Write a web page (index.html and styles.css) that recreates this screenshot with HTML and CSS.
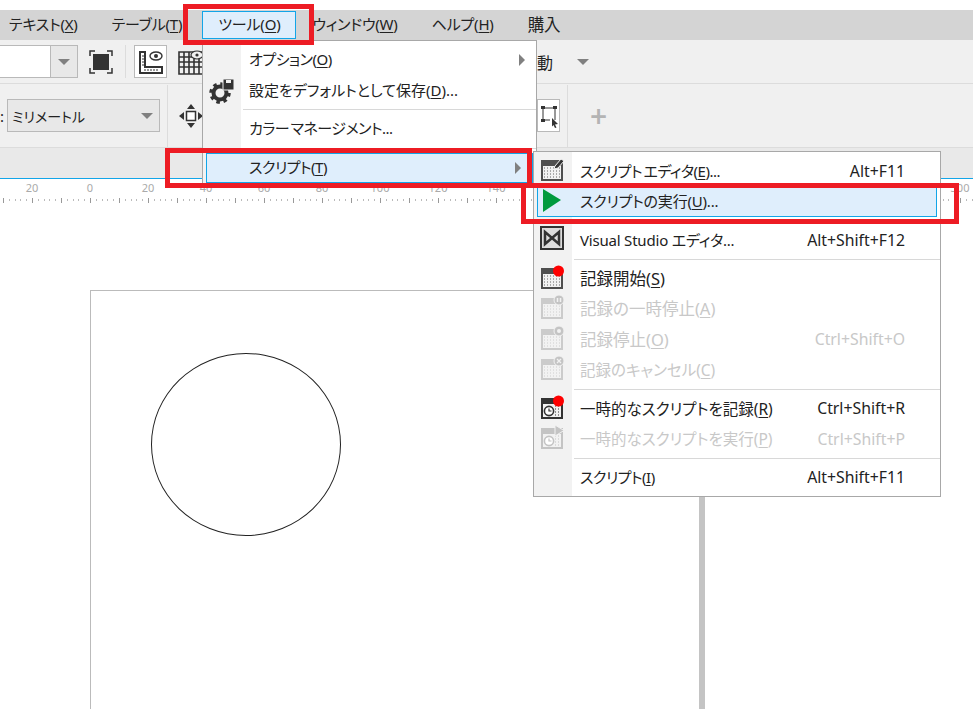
FILE: index.html
```html
<!DOCTYPE html>
<html lang="ja">
<head>
  <meta charset="UTF-8" />
  <title>ツール メニュー</title>
  <link rel="stylesheet" href="styles.css">
</head>
<body>
  <svg class="defs" width="0" height="0">
    <symbol id="cal" viewBox="0 0 24 24">
      <path d="M1 3h22v21H1z M3 9v13h18V9z" fill="currentColor" fill-rule="evenodd" opacity=".85"/>
      <g stroke="currentColor" stroke-width="1" stroke-dasharray="1 2" opacity=".75">
        <path d="M4 11h16M4 14h16M4 17h16M4 20h16"/>
      </g>
    </symbol>
    <symbol id="clock" viewBox="0 0 24 24">
      <path d="M1 3h22v21H1z M3 9v13h18V9z" fill="currentColor" fill-rule="evenodd"/>
      <g stroke="currentColor" stroke-width="1" stroke-dasharray="1 2">
        <path d="M15 11h5M15 14h5M15 17h5M15 20h5"/>
      </g>
      <circle cx="9" cy="16" r="4.6" fill="#fff" stroke="currentColor" stroke-width="1.6"/>
      <path d="M9 13.5V16h2.5" fill="none" stroke="currentColor" stroke-width="1.2"/>
    </symbol>
  </svg>

  <div class="app">
    <nav class="menubar">
      <span class="menubar-item">テキスト(<u>X</u>)</span>
      <span class="menubar-item">テーブル(<u>T</u>)</span>
      <span class="menubar-item active">ツール(<u>O</u>)</span>
      <span class="menubar-item">ウィンドウ(<u>W</u>)</span>
      <span class="menubar-item">ヘルプ(<u>H</u>)</span>
      <span class="menubar-item buy">購入</span>
    </nav>

    <div class="toolbar toolbar-top">
      <div class="combo combo-white"><span class="combo-arrow"><i class="caret"></i></span></div>
      <svg class="tool-frame" width="24" height="24" viewBox="0 0 24 24">
        <rect x="4" y="4" width="16" height="16" fill="#333"/>
        <path d="M1 6V1h5M18 1h5v5M23 18v5h-5M6 23H1v-5" fill="none" stroke="#333" stroke-width="1.5"/>
      </svg>
      <span class="divider"></span>
      <span class="tool-btn">
        <svg width="26" height="26" viewBox="0 0 26 26">
          <path d="M2 3h5v15h17v6H2z" fill="none" stroke="#333" stroke-width="2"/>
          <path d="M4 7h2M4 10h2M4 13h2M4 16h2M7 20v2M10 20v2M13 20v2M16 20v2M19 20v2" stroke="#333"/>
          <ellipse cx="18" cy="7" rx="6" ry="4" fill="none" stroke="#333" stroke-width="1.4"/>
          <circle cx="18" cy="7" r="2" fill="#333"/>
        </svg>
      </span>
      <svg class="tool-grid" width="26" height="26" viewBox="0 0 26 26">
        <path d="M1 3h24v22H1z M1 8h24M1 13h24M1 18h24M6 3v22M11 3v22M16 3v22M21 3v22" fill="none" stroke="#333" stroke-width="1.6"/>
        <ellipse cx="19" cy="6" rx="6" ry="4" fill="#f0f0f0" stroke="#333" stroke-width="1.2"/>
        <circle cx="19" cy="6" r="1.6" fill="#333"/>
      </svg>
      <span class="tool-label">動</span>
      <i class="caret caret-far"></i>
    </div>

    <div class="toolbar toolbar-second">
      <span class="unit-colon">:</span>
      <div class="combo combo-gray"><span class="combo-text">ミリメートル</span><i class="caret"></i></div>
      <span class="divider divider-tall"></span>
      <svg class="tool-move" width="24" height="24" viewBox="0 0 24 24">
        <path d="M12 0l4 5H8zM12 24l-4-5h8zM0 12l5-4v8zM24 12l-5 4V8z" fill="#333"/>
        <rect x="7.5" y="7.5" width="9" height="9" fill="#fff" stroke="#333" stroke-width="1.5"/>
      </svg>
      <span class="tool-btn tool-btn-slim">
        <svg width="20" height="26" viewBox="0 0 20 26">
          <path d="M4 5h12v12M4 5v12h7" fill="none" stroke="#333"/>
          <path d="M2 3h4v3H2zM14 3h4v3h-4zM2 16h4v3H2z" fill="#333"/>
          <path d="M13 15l6 6-3 .5 1.500 3-1.500.5-1.500-3-1.500 1.500z" fill="#333"/>
        </svg>
      </span>
      <span class="divider divider-tall"></span>
      <span class="tool-plus">+</span>
    </div>

    <div class="tabstrip"></div>

    <div class="ruler">
      <span>20</span><span>0</span><span>20</span><span>40</span><span>60</span><span>80</span><span>100</span><span>120</span><span>140</span><span class="ruler-gap"></span><span>300</span>
    </div>

    <main class="canvas">
      <div class="page">
        <div class="circle"></div>
      </div>
    </main>
  </div>

  <div class="menu menu-tools">
    <div class="menu-row"><span class="menu-text tight">オプション(<u>O</u>)</span><i class="arrow"></i></div>
    <div class="menu-row">
      <span class="menu-text">設定をデフォルトとして保存(<u>D</u>)...</span>
      <svg class="gear" width="26" height="26" viewBox="0 0 26 26">
        <circle cx="11" cy="15" r="6.500" fill="none" stroke="#333" stroke-width="4"/>
        <circle cx="11" cy="15" r="9" fill="none" stroke="#333" stroke-width="3.500" stroke-dasharray="3.500 3.570"/>
        <path d="M14 1h11v11H14z" fill="#333" stroke="#f2f2f2"/>
        <path d="M17 2h5v3h-5z" fill="#f2f2f2"/>
      </svg>
    </div>
    <div class="menu-sep"></div>
    <div class="menu-row"><span class="menu-text tight spaced">カラー マネージメント...</span></div>
    <div class="menu-sep"></div>
    <div class="menu-row highlighted"><span class="menu-text tight">スクリプト(<u>T</u>)</span><i class="arrow"></i></div>
  </div>

  <div class="menu menu-script">
    <div class="menu-row">
      <svg class="icon" width="24" height="24" viewBox="0 0 24 24">
        <use href="#cal"/>
        <path d="M15 9l6-7 3 2-6 7-4 1z" fill="#333" stroke="#f2f2f2"/>
      </svg>
      <span class="menu-text tight spaced">スクリプト エディタ(<u>E</u>)...</span><span class="shortcut">Alt+F11</span>
    </div>
    <div class="menu-row highlighted">
      <svg class="icon" width="24" height="24" viewBox="0 0 24 24"><path d="M3 1l18 11L3 24z" fill="#009a3e"/></svg>
      <span class="menu-text slight">スクリプトの実行(<u>U</u>)...</span>
    </div>
    <div class="menu-sep"></div>
    <div class="menu-row">
      <svg class="icon" width="24" height="24" viewBox="0 0 24 24">
        <rect x="1" y="1" width="22" height="22" fill="#ddd" stroke="#333" stroke-width="2"/>
        <path d="M5 6l14 12V6L5 18z" fill="none" stroke="#333" stroke-width="2.500"/>
      </svg>
      <span class="menu-text slight">Visual Studio エディタ...</span><span class="shortcut">Alt+Shift+F12</span>
    </div>
    <div class="menu-sep"></div>
    <div class="menu-row">
      <svg class="icon" width="24" height="24" viewBox="0 0 24 24"><use href="#cal"/><circle cx="18.500" cy="6" r="5.500" fill="#f00"/></svg>
      <span class="menu-text kanji">記録開始(<u>S</u>)</span>
    </div>
    <div class="menu-row disabled">
      <svg class="icon" width="24" height="24" viewBox="0 0 24 24">
        <use href="#cal"/><circle cx="19" cy="5" r="5" fill="#c4c4c4" stroke="#f2f2f2"/>
        <path d="M17.500 3v4M20.500 3v4" stroke="#f2f2f2" stroke-width="1.500"/>
      </svg>
      <span class="menu-text kanji">記録の一時停止(<u>A</u>)</span>
    </div>
    <div class="menu-row disabled">
      <svg class="icon" width="24" height="24" viewBox="0 0 24 24">
        <use href="#cal"/><circle cx="19" cy="5" r="5" fill="#c4c4c4" stroke="#f2f2f2"/>
        <circle cx="19" cy="5" r="2" fill="#f2f2f2"/>
      </svg>
      <span class="menu-text kanji">記録停止(<u>O</u>)</span><span class="shortcut">Ctrl+Shift+O</span>
    </div>
    <div class="menu-row disabled">
      <svg class="icon" width="24" height="24" viewBox="0 0 24 24">
        <use href="#cal"/><circle cx="19" cy="5" r="5" fill="#c4c4c4" stroke="#f2f2f2"/>
        <path d="M17 3l4 4M21 3l-4 4" stroke="#f2f2f2" stroke-width="1.300"/>
      </svg>
      <span class="menu-text mid">記録のキャンセル(<u>C</u>)</span>
    </div>
    <div class="menu-sep"></div>
    <div class="menu-row">
      <svg class="icon" width="24" height="24" viewBox="0 0 24 24"><use href="#clock"/><circle cx="18.500" cy="6" r="5.500" fill="#f00"/></svg>
      <span class="menu-text mid">一時的なスクリプトを記録(<u>R</u>)</span><span class="shortcut">Ctrl+Shift+R</span>
    </div>
    <div class="menu-row disabled">
      <svg class="icon" width="24" height="24" viewBox="0 0 24 24"><use href="#clock"/><path d="M15 0l9 5.500L15 11z" fill="#c4c4c4" stroke="#f2f2f2"/></svg>
      <span class="menu-text mid">一時的なスクリプトを実行(<u>P</u>)</span><span class="shortcut">Ctrl+Shift+P</span>
    </div>
    <div class="menu-sep"></div>
    <div class="menu-row">
      <span class="icon"></span>
      <span class="menu-text tight">スクリプト(<u>I</u>)</span><span class="shortcut">Alt+Shift+F11</span>
    </div>
  </div>

  <div class="callout callout-tools"></div>
  <div class="callout callout-script"></div>
  <div class="callout callout-run"></div>
</body>
</html>
```

FILE: styles.css
```css
html, body {
  margin: 0;
  padding: 0;
}
body {
  position: relative;
  width: 973px;
  height: 709px;
  overflow: hidden;
  background: #fff;
  color: #222;
  font-family: "Noto Sans", "Noto Sans CJK JP", sans-serif;
  font-size: 15px;
  font-feature-settings: "palt";
}
u {
  text-underline-offset: 2px;
}
.defs {
  position: absolute;
}
.app {
  display: flex;
  flex-direction: column;
  height: 709px;
  padding-top: 10px;
  box-sizing: border-box;
}

/* menu bar */
.menubar {
  display: flex;
  align-items: center;
  flex: none;
  height: 30px;
  background: #d4d4d4;
}
.menubar-item {
  display: flex;
  align-items: center;
  box-sizing: border-box;
  height: 28px;
  padding: 0 15px 3px;
  margin: 0 1px;
  white-space: pre;
  letter-spacing: -0.2px;
  border: 1px solid transparent;
}
.menubar-item:first-child {
  margin-left: -7px;
}
.menubar-item.active {
  margin: 0 -1px 0 3px;
  background: #dfeefc;
  border-color: #12a5e8;
}
.menubar-item.buy {
  font-size: 16.500px;
}

/* toolbars */
.toolbar {
  display: flex;
  align-items: center;
  flex: none;
  background: #f0f0f0;
  border-bottom: 1px solid #dcdcdc;
  box-sizing: border-box;
}
.toolbar-top {
  height: 44px;
}
.toolbar-second {
  height: 64px;
}
.combo {
  display: flex;
  align-items: center;
  box-sizing: border-box;
  border: 1px solid #b9b9b9;
}
.combo-white {
  width: 79px;
  height: 33px;
  margin-left: -1px;
  background: #fff;
  justify-content: flex-end;
}
.combo-arrow {
  display: flex;
  align-items: center;
  justify-content: center;
  width: 26px;
  height: 100%;
  background: #e8e8e8;
  border-left: 1px solid #b9b9b9;
}
.combo-gray {
  justify-content: space-between;
  width: 153px;
  height: 33px;
  padding: 0 6px 0 4px;
  background: #e8e8e8;
}
.combo-text {
  font-size: 14px;
}
.caret {
  display: block;
  width: 0;
  height: 0;
  border-left: 6px solid transparent;
  border-right: 6px solid transparent;
  border-top: 6px solid #808080;
}
.caret-far {
  margin-left: 24px;
}
.tool-frame {
  margin-left: 11px;
}
.divider {
  width: 1px;
  height: 33px;
  margin-left: 12px;
  background: #dcdcdc;
}
.divider-tall {
  height: 62px;
  margin-left: 7px;
}
.tool-btn {
  display: flex;
  align-items: center;
  justify-content: center;
  box-sizing: border-box;
  width: 33px;
  height: 33px;
  margin-left: 8px;
  background: #fff;
  border: 1px solid #b9b9b9;
}
.tool-btn-slim {
  width: 23px;
  margin-left: 334px;
}
.tool-grid {
  margin-left: 11px;
}
.tool-label {
  margin-left: 333px;
  font-size: 16px;
}
.unit-colon {
  width: 7px;
}
.tool-move {
  margin-left: 11px;
}
.tool-plus {
  margin-left: 22px;
  color: #b4b4b4;
  font-size: 30px;
  font-weight: 600;
  line-height: 1;
}
.tabstrip {
  flex: none;
  height: 31px;
  box-sizing: border-box;
  background: #e9e9e9;
  border-bottom: 1px solid #12a5e8;
}

/* ruler */
.ruler {
  display: flex;
  flex: none;
  height: 25px;
  box-sizing: border-box;
  margin-left: 3px;
  color: #aaa;
  font-size: 11px;
  line-height: 17px;
  background:
    repeating-linear-gradient(90deg, #999 0 1px, transparent 1px 29px) 0 19px / 100% 5px no-repeat,
    repeating-linear-gradient(90deg, #bbb 0 1px, transparent 1px 5.800px) 0 20px / 100% 2px no-repeat;
}
.ruler span {
  flex: none;
  width: 58px;
  text-align: center;
}
.ruler .ruler-gap {
  width: 406px;
}

/* drawing area */
.canvas {
  flex: 1;
  padding: 86px 0 0 90px;
  overflow: hidden;
  background: #fff;
}
.page {
  box-sizing: border-box;
  width: 615px;
  height: 600px;
  padding: 62px 0 0 60px;
  background: #fff;
  border: solid #c4c4c4;
  border-width: 1px 6px 0 1px;
  border-top-color: #bbb;
  border-left-color: #bbb;
}
.circle {
  box-sizing: border-box;
  width: 190px;
  height: 183px;
  border: 1px solid #222;
  border-radius: 50%;
}

/* dropdown menus */
.menu {
  position: absolute;
  box-sizing: border-box;
  background: linear-gradient(90deg, #f2f2f2 38px, #fff 38px);
  border: 1px solid #a8a8a8;
}
.menu-tools {
  left: 202px;
  top: 40px;
  width: 335px;
  height: 144px;
  padding-top: 4px;
}
.menu-script {
  left: 533px;
  top: 151px;
  width: 408px;
  height: 346px;
  padding-top: 4px;
}
.menu-row {
  position: relative;
  display: flex;
  align-items: center;
  height: 30.500px;
  padding-left: 46px;
  white-space: pre;
}
.menu-script .menu-row {
  padding-left: 6px;
}
.menu-script .menu-text {
  margin-left: 16px;
  padding-bottom: 2px;
}
.menu-row.highlighted {
  box-sizing: border-box;
  background: #dfeefc;
  border: 1px solid #12a5e8;
}
.menu-tools .highlighted {
  margin: 0 3px;
  padding-left: 42px;
}
.menu-script .highlighted {
  margin: 0 3px;
  padding-left: 2px;
}
.menu-row.disabled {
  color: #c8c8c8;
}
.menu-row.disabled .icon {
  color: #c4c4c4;
}
.menu-text {
  flex: 1;
  padding-bottom: 3px;
}
.menu-text.tight {
  letter-spacing: -0.5px;
}
.menu-text.slight {
  letter-spacing: -0.2px;
}
.menu-text.spaced {
  word-spacing: -2px;
}
.menu-text.kanji {
  font-size: 16.500px;
}
.menu-script .menu-text.mid {
  padding-bottom: 1px;
  font-size: 15.500px;
}
.shortcut {
  margin-right: 35px;
  padding-bottom: 1px;
  font-size: 15.800px;
}
.icon {
  flex: none;
  width: 24px;
  height: 24px;
  margin-top: -4px;
  color: #333;
}
.arrow {
  position: absolute;
  right: 11px;
  top: 50%;
  margin-top: -6px;
  border-left: 6px solid #808080;
  border-top: 6px solid transparent;
  border-bottom: 6px solid transparent;
}
.gear {
  position: absolute;
  left: 6px;
  top: 2px;
}
.menu-sep {
  height: 8px;
  box-sizing: border-box;
  margin-left: 38px;
  padding-top: 3px;
}
.menu-sep::after {
  content: "";
  display: block;
  height: 1px;
  margin-left: 2px;
  background: #d8d8d8;
}

/* red annotation boxes */
.callout {
  position: absolute;
  box-sizing: border-box;
  border: 5px solid #ed1c24;
}
.callout-tools {
  left: 183px;
  top: 4px;
  width: 131px;
  height: 41px;
}
.callout-script {
  left: 165px;
  top: 148px;
  width: 367px;
  height: 40px;
}
.callout-run {
  left: 521px;
  top: 183px;
  width: 438px;
  height: 41px;
}
```
